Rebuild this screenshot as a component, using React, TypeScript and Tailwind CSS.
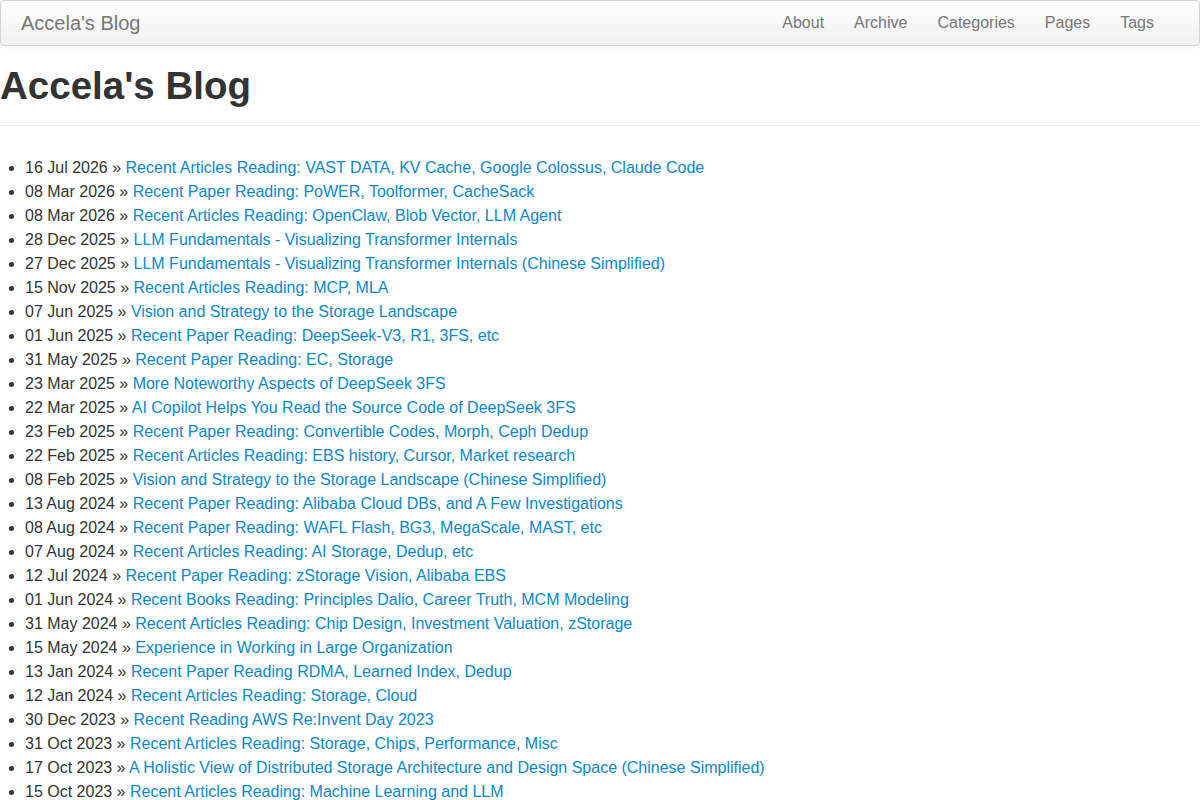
const posts: [string, string][] = [
  ['16 Jul 2026', 'Recent Articles Reading: VAST DATA, KV Cache, Google Colossus, Claude Code'],
  ['08 Mar 2026', 'Recent Paper Reading: PoWER, Toolformer, CacheSack'],
  ['08 Mar 2026', 'Recent Articles Reading: OpenClaw, Blob Vector, LLM Agent'],
  ['28 Dec 2025', 'LLM Fundamentals - Visualizing Transformer Internals'],
  ['27 Dec 2025', 'LLM Fundamentals - Visualizing Transformer Internals (Chinese Simplified)'],
  ['15 Nov 2025', 'Recent Articles Reading: MCP, MLA'],
  ['07 Jun 2025', 'Vision and Strategy to the Storage Landscape'],
  ['01 Jun 2025', 'Recent Paper Reading: DeepSeek-V3, R1, 3FS, etc'],
  ['31 May 2025', 'Recent Paper Reading: EC, Storage'],
  ['23 Mar 2025', 'More Noteworthy Aspects of DeepSeek 3FS'],
  ['22 Mar 2025', 'AI Copilot Helps You Read the Source Code of DeepSeek 3FS'],
  ['23 Feb 2025', 'Recent Paper Reading: Convertible Codes, Morph, Ceph Dedup'],
  ['22 Feb 2025', 'Recent Articles Reading: EBS history, Cursor, Market research'],
  ['08 Feb 2025', 'Vision and Strategy to the Storage Landscape (Chinese Simplified)'],
  ['13 Aug 2024', 'Recent Paper Reading: Alibaba Cloud DBs, and A Few Investigations'],
  ['08 Aug 2024', 'Recent Paper Reading: WAFL Flash, BG3, MegaScale, MAST, etc'],
  ['07 Aug 2024', 'Recent Articles Reading: AI Storage, Dedup, etc'],
  ['12 Jul 2024', 'Recent Paper Reading: zStorage Vision, Alibaba EBS'],
  ['01 Jun 2024', 'Recent Books Reading: Principles Dalio, Career Truth, MCM Modeling'],
  ['31 May 2024', 'Recent Articles Reading: Chip Design, Investment Valuation, zStorage'],
  ['15 May 2024', 'Experience in Working in Large Organization'],
  ['13 Jan 2024', 'Recent Paper Reading RDMA, Learned Index, Dedup'],
  ['12 Jan 2024', 'Recent Articles Reading: Storage, Cloud'],
  ['30 Dec 2023', 'Recent Reading AWS Re:Invent Day 2023'],
  ['31 Oct 2023', 'Recent Articles Reading: Storage, Chips, Performance, Misc'],
  ['17 Oct 2023', 'A Holistic View of Distributed Storage Architecture and Design Space (Chinese Simplified)'],
  ['15 Oct 2023', 'Recent Articles Reading: Machine Learning and LLM'],
]

const navLinks = ['About', 'Archive', 'Categories', 'Pages', 'Tags']

export default function App() {
  return (
    <div className="min-h-screen bg-white text-[#333] font-['Liberation_Sans',Arial,sans-serif] text-[16px] leading-[24px]">
      {/* top navbar */}
      <nav className="flex h-[46px] items-center justify-between rounded-[4px] border border-[#d4d4d4] bg-gradient-to-b from-white to-[#f0f0f0] shadow-[0_1px_4px_rgba(0,0,0,0.065)]">
        <a href="#" className="pl-5 text-[20px] text-[#777]">
          Accela's Blog
        </a>
        <ul className="flex pr-[30px]">
          {navLinks.map((link) => (
            <li key={link}>
              <a href="#" className="block px-[15px] text-[16px] text-[#777]">
                {link}
              </a>
            </li>
          ))}
        </ul>
      </nav>

      <div className="mt-[17px] border-b border-[#eee] pb-[16px]">
        <h1 className="text-[38.5px] font-bold leading-[46px] text-[#333]">Accela's Blog</h1>
      </div>

      <ul className="mt-[30px] list-disc pl-[25px]">
        {posts.map(([date, title], i) => (
          <li key={i}>
            {date} &raquo;{' '}
            <a href="#" className="text-[#0d88c9]">
              {title}
            </a>
          </li>
        ))}
      </ul>
    </div>
  )
}
